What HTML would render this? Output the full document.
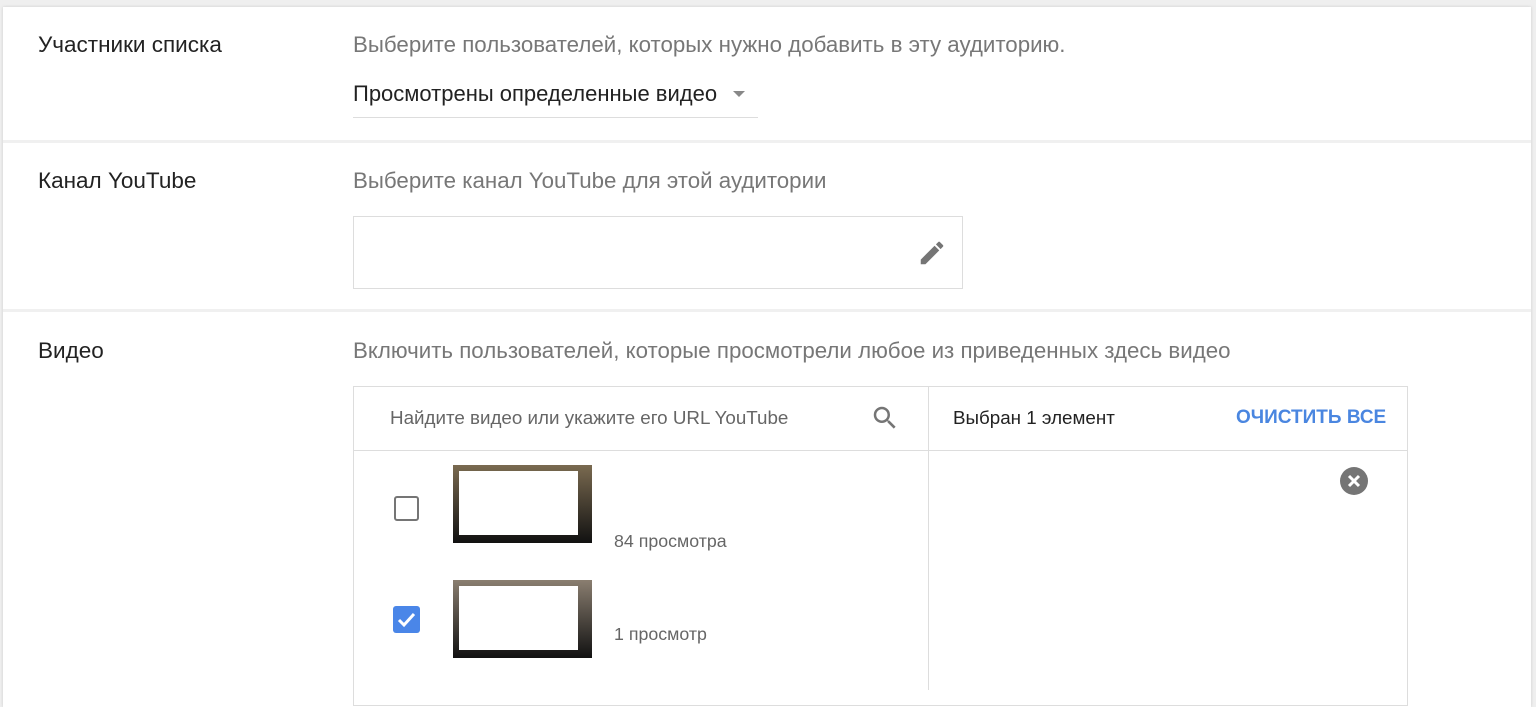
<!DOCTYPE html>
<html><head><meta charset="utf-8"><style>
*{margin:0;padding:0;box-sizing:border-box}
body{width:1536px;height:690px;overflow:hidden;background:#efefef;font-family:"Liberation Sans",sans-serif;position:relative}
.card{position:absolute;left:3px;top:7px;width:1528px;height:700px;background:#fff;box-shadow:0 0 3px rgba(0,0,0,.15)}
.sep{position:absolute;left:3px;width:1528px;height:3px;background:#f0f0f0}
.t{position:absolute;white-space:nowrap}
.lab{font-size:22.5px;color:#222}
.desc{font-size:22.3px;color:#777}
.box{position:absolute;border:1px solid #ddd;background:#fff}
.thumb{position:absolute;width:139px;height:78px;background:linear-gradient(#7a6a50,#111);}
.thumb i{position:absolute;left:6px;top:6px;right:14px;bottom:8px;background:#fff}
</style></head><body>
<div class="card"></div>
<div class="sep" style="top:140px"></div>
<div class="sep" style="top:309px"></div>

<div class="t lab" style="left:38px;top:32px">Участники списка</div>
<div class="t desc" style="left:353px;top:32px">Выберите пользователей, которых нужно добавить в эту аудиторию.</div>
<div class="t" style="left:353px;top:81px;font-size:22px;color:#222">Просмотрены определенные видео</div>
<div style="position:absolute;left:733px;top:91px;width:0;height:0;border-left:6px solid transparent;border-right:6px solid transparent;border-top:6px solid #888"></div>
<div style="position:absolute;left:353px;top:117px;width:405px;height:1px;background:#ddd"></div>

<div class="t lab" style="left:38px;top:168px">Канал YouTube</div>
<div class="t desc" style="left:353px;top:168px">Выберите канал YouTube для этой аудитории</div>
<div class="box" style="left:353px;top:216px;width:610px;height:73px"></div>
<svg style="position:absolute;left:917px;top:238px" width="30" height="30" viewBox="0 0 24 24"><path fill="#757575" d="M3 17.25V21h3.75L17.81 9.94l-3.75-3.75L3 17.25zM20.71 7.04a1 1 0 0 0 0-1.41l-2.34-2.34a1 1 0 0 0-1.41 0l-1.83 1.83 3.75 3.75 1.83-1.83z"/></svg>

<div class="t lab" style="left:38px;top:338px">Видео</div>
<div class="t desc" style="left:353px;top:338px">Включить пользователей, которые просмотрели любое из приведенных здесь видео</div>

<div class="box" style="left:353px;top:386px;width:1055px;height:320px"></div>
<div style="position:absolute;left:928px;top:386px;width:1px;height:304px;background:#ddd"></div>
<div style="position:absolute;left:353px;top:450px;width:1055px;height:1px;background:#ddd"></div>
<div class="t" style="left:390px;top:407px;font-size:18.8px;color:#666">Найдите видео или укажите его URL YouTube</div>
<svg style="position:absolute;left:870px;top:403px" width="30" height="30" viewBox="0 0 24 24"><path fill="#757575" d="M15.5 14h-.79l-.28-.27A6.47 6.47 0 0 0 16 9.5 6.5 6.5 0 1 0 9.5 16c1.61 0 3.09-.59 4.23-1.57l.27.28v.79l5 4.99L20.49 19l-4.99-5zm-6 0C7.01 14 5 11.99 5 9.5S7.01 5 9.5 5 14 7.01 14 9.5 11.99 14 9.5 14z"/></svg>
<div class="t" style="left:953px;top:407px;font-size:18.8px;color:#222">Выбран 1 элемент</div>
<div class="t" style="left:1236px;top:407px;font-size:19px;color:#4a86e0;font-weight:bold">ОЧИСТИТЬ ВСЕ</div>
<svg style="position:absolute;left:1339px;top:466px" width="30" height="30" viewBox="0 0 30 30"><circle cx="15" cy="15" r="14" fill="#757575"/><path d="M10 10L20 20M20 10L10 20" stroke="#fff" stroke-width="3"/></svg>

<div style="position:absolute;left:394px;top:496px;width:25px;height:25px;border:2px solid #757575;border-radius:3px"></div>
<div class="thumb" style="left:453px;top:465px"><i></i></div>
<div class="t" style="left:614px;top:531px;font-size:17.8px;color:#666">84 просмотра</div>

<svg style="position:absolute;left:393px;top:606px" width="27" height="27" viewBox="0 0 27 27"><rect width="27" height="27" rx="3" fill="#4a86e8"/><path d="M6 14l5 5L21 8" stroke="#fff" stroke-width="3" fill="none"/></svg>
<div class="thumb" style="left:453px;top:580px;background:linear-gradient(#8a7e70,#111)"><i></i></div>
<div class="t" style="left:614px;top:624px;font-size:17.8px;color:#666">1 просмотр</div>
</body></html>
